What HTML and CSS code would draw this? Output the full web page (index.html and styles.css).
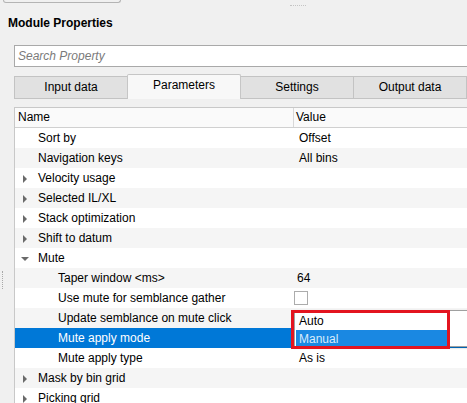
FILE: index.html
```html
<!DOCTYPE html>
<html lang="en">
<head>
  <meta charset="UTF-8">
  <title>Module Properties</title>
  <link rel="stylesheet" href="styles.css">
</head>
<body>

  <div class="top-btn"></div>
  <div class="grip-h"></div>

  <div class="title">Module Properties</div>

  <div class="main">
    <!-- left splitter -->
    <div class="side">
      <div class="grip-v"></div>
    </div>

    <div class="content">
      <div class="search">Search Property</div>

      <div class="tabs">
        <div class="tab first">Input data</div>
        <div class="tab active">Parameters</div>
        <div class="tab">Settings</div>
        <div class="tab">Output data</div>
      </div>

      <div class="tree">
        <div class="head">
          <div class="name">Name</div>
          <div class="value">Value</div>
        </div>

        <div class="row">
          <div class="name l1">Sort by</div>
          <div class="value">Offset</div>
        </div>
        <div class="row alt">
          <div class="name l1">Navigation keys</div>
          <div class="value">All bins</div>
        </div>
        <div class="row">
          <div class="name l1"><span class="arrow"></span>Velocity usage</div>
          <div class="value"></div>
        </div>
        <div class="row alt">
          <div class="name l1"><span class="arrow"></span>Selected IL/XL</div>
          <div class="value"></div>
        </div>
        <div class="row">
          <div class="name l1"><span class="arrow"></span>Stack optimization</div>
          <div class="value"></div>
        </div>
        <div class="row alt">
          <div class="name l1"><span class="arrow"></span>Shift to datum</div>
          <div class="value"></div>
        </div>
        <div class="row">
          <div class="name l1"><span class="arrow open"></span>Mute</div>
          <div class="value"></div>
        </div>
        <div class="row alt">
          <div class="name l2">Taper window &lt;ms&gt;</div>
          <div class="value num">64</div>
        </div>
        <div class="row">
          <div class="name l2">Use mute for semblance gather</div>
          <div class="value"><span class="check"></span></div>
        </div>
        <div class="row alt">
          <div class="name l2">Update semblance on mute click</div>
          <div class="value drop-cell">
            <div class="popup">
              <div class="item">Auto</div>
              <div class="item sel">Manual</div>
            </div>
            <div class="mark"></div>
          </div>
        </div>
        <div class="row selected">
          <div class="name l2">Mute apply mode</div>
          <div class="value"></div>
        </div>
        <div class="row">
          <div class="name l2">Mute apply type</div>
          <div class="value">As is</div>
        </div>
        <div class="row alt">
          <div class="name l1"><span class="arrow"></span>Mask by bin grid</div>
          <div class="value"></div>
        </div>
        <div class="row">
          <div class="name l1"><span class="arrow"></span>Picking grid</div>
          <div class="value"></div>
        </div>
      </div>
    </div>
  </div>

</body>
</html>
```

FILE: styles.css
```css
body {
  margin: 0;
  background: #f0f0f0;
  font-family: "Liberation Sans", Arial, sans-serif;
  font-size: 12px;
  color: #000;
  overflow: hidden;
}
.top-btn {
  width: 116px;
  height: 2px;
  margin-left: 3px;
  border: 1px solid #b4b4b4;
  border-top: none;
  border-radius: 0 0 3px 3px;
}
.grip-h {
  width: 16px;
  height: 0;
  margin: 2px 0 0 290px;
  border-top: 1px dotted #c4c4c4;
}
.title {
  font-weight: bold;
  height: 20px;
  line-height: 20px;
  margin: 7px 0 0 8px;
}
.main {
  display: flex;
  margin-top: 12px;
}
.side {
  width: 14px;
  flex: none;
}
.grip-v {
  width: 0;
  height: 18px;
  margin: 226px 0 0 2px;
  border-left: 1px dotted #a8a8a8;
}
.content {
  width: 460px;
  flex: none;
}
.search {
  box-sizing: border-box;
  height: 22px;
  line-height: 20px;
  padding-left: 3px;
  background: #fff;
  border: 1px solid #a9a9a9;
  color: #7a7a7a;
  font-style: italic;
}
.tabs {
  display: flex;
  align-items: flex-end;
  height: 25px;
  margin-top: 7px;
}
.tab {
  box-sizing: border-box;
  width: 114px;
  height: 23px;
  line-height: 21px;
  margin-left: -1px;
  text-align: center;
  background: #e1e1e1;
  border: 1px solid #c3c3c3;
}
.tab.first {
  margin-left: 0;
}
.tab.active {
  height: 25px;
  line-height: 21px;
  background: #f8f8f8;
  border-color: #c6c6c6;
  border-bottom: none;
  border-radius: 2px 2px 0 0;
  position: relative;
  z-index: 1;
}
.tree {
  margin-top: 8px;
  background: #fff;
  border-top: 1px solid #c8c8c8;
  border-left: 1px solid #c8c8c8;
}
.head {
  display: flex;
  height: 19px;
  line-height: 18px;
  background: #fafafa;
  border-bottom: 1px solid #d0d0d0;
}
.head .name {
  width: 275px;
  padding-left: 3px;
  border-right: 1px solid #d8d8d8;
}
.head .value {
  padding-left: 2px;
}
.row {
  display: flex;
  height: 20px;
  line-height: 20px;
  background: #fff;
}
.row.alt {
  background: #f5f5f5;
}
.row .name {
  box-sizing: border-box;
  width: 278px;
  flex: none;
  position: relative;
}
.row .value {
  flex: 1;
  padding-left: 6px;
}
.row .value.num {
  padding-left: 4px;
}
.l1 {
  padding-left: 23px;
}
.l2 {
  padding-left: 43px;
}
.row.selected {
  background: #0078d7;
  color: #fff;
}
.arrow {
  display: inline-block;
  width: 0;
  height: 0;
  margin: 0 11px 0 -15px;
  vertical-align: -1px;
  border-top: 4px solid transparent;
  border-bottom: 4px solid transparent;
  border-left: 4px solid #6a6a6a;
}
.arrow.open {
  margin: 0 9px 0 -17px;
  vertical-align: 1px;
  border-left: 4px solid transparent;
  border-right: 4px solid transparent;
  border-top: 4px solid #6a6a6a;
  border-bottom: none;
}
.check {
  display: inline-block;
  box-sizing: border-box;
  width: 14px;
  height: 14px;
  margin-left: -5px;
  vertical-align: -3px;
  background: #fff;
  border: 1px solid #acacac;
}
.drop-cell {
  position: relative;
}
.popup {
  position: absolute;
  left: 1px;
  top: 2px;
  width: 200px;
  height: 37px;
  box-sizing: border-box;
  padding: 1px 0 0 1px;
  background: #fff;
  border: 1px solid #a0a0a0;
  border-right: none;
  box-shadow: 0 1px 2px rgba(0, 0, 0, 0.25);
  z-index: 2;
}
.item {
  width: 152px;
  height: 18px;
  line-height: 18px;
  padding-left: 3px;
  box-sizing: border-box;
}
.item.sel {
  background: #1a88e2;
  color: #d9ebfb;
}
.mark {
  position: absolute;
  left: -2px;
  top: 2px;
  width: 159px;
  height: 39px;
  box-sizing: border-box;
  border: 3px solid #e3141f;
  z-index: 3;
}
```
